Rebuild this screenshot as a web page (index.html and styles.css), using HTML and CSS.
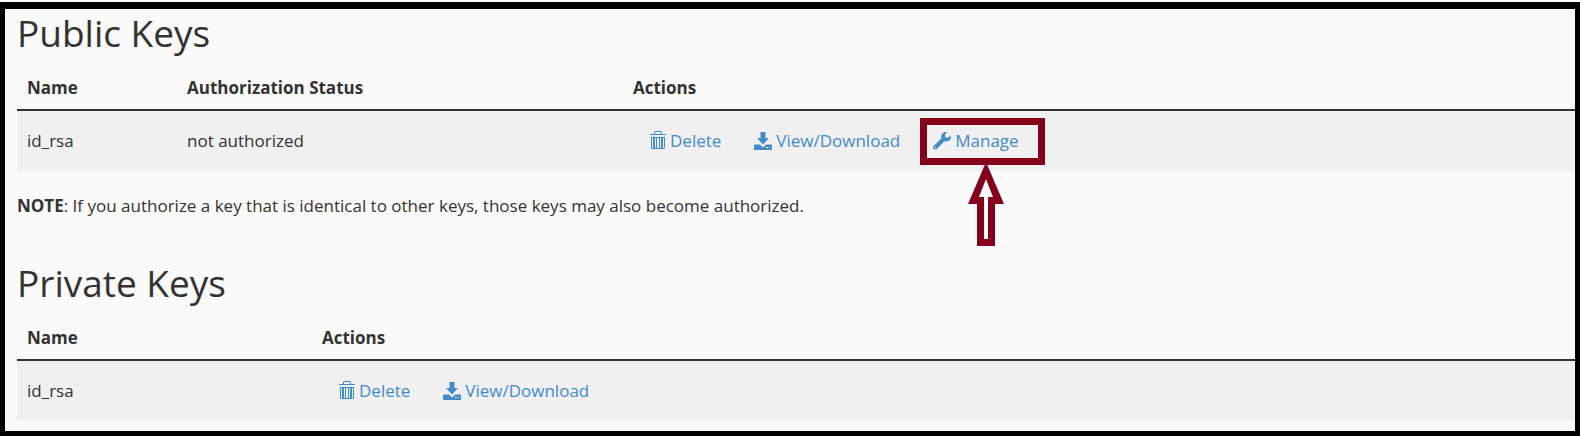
FILE: index.html
```
<!DOCTYPE html>
<html lang="en">
<head>
<meta charset="utf-8">
<title>Manage SSH Keys</title>
<link rel="stylesheet" href="styles.css">
</head>
<body>
<svg class="sprite" aria-hidden="true">
  <symbol id="trash" viewBox="0 0 16 18">
    <path d="M0 3h16v1H0zM4 3V1l1-1h6l1 1v2h-1V1H5v2zM1 6h14v11l-1 1H2l-1-1zM2 7v10h1V7zM5 7v10h1V7zM7 7v10h2V7zM10 7v10h1V7zM13 7v10h1V7z" fill-rule="evenodd"/>
  </symbol>
  <symbol id="download" viewBox="0 0 18 18">
    <path d="M6.500 0h5v6H15L9 12.500 3 6h3.500zM.5 12.500H6l3 3 3-3h5.500l.5.500v4.500l-.5.500H.5L0 17.500V13zM12 15v1h2v-1zM15 15v1h1v-1z" fill-rule="evenodd"/>
  </symbol>
  <symbol id="wrench" viewBox="0 0 18 18">
    <path d="M17.600 3.500c.9 2.400-.2 4.600-2.300 5.500-1.300.6-2.800.6-4 .2L3.800 16.900c-.8.900-2.100.9-3 .1s-.9-2.100-.1-3l7.600-7.400C7.700 4 8.700 1.700 10.800.6c1.200-.6 2.300-.6 3.300-.3L12 2.500l.3 2.800 2.900.4zM2.300 14.900a.8.800 0 1 0 0 1.600.8.800 0 0 0 0-1.600z" fill-rule="evenodd"/>
  </symbol>
</svg>
<main class="page">
  <section class="keys">
    <h2 class="title">Public Keys</h2>
    <table class="table">
      <colgroup><col class="col-name"><col class="col-status"><col></colgroup>
      <thead><tr><th>Name</th><th>Authorization Status</th><th>Actions</th></tr></thead>
      <tbody>
        <tr>
          <td>id_rsa</td>
          <td>not authorized</td>
          <td>
            <div class="actions">
              <a class="action" href="#delete"><svg class="icon icon-trash"><use href="#trash"/></svg>Delete</a>
              <a class="action" href="#view"><svg class="icon"><use href="#download"/></svg>View/Download</a>
              <a class="action" href="#manage"><svg class="icon"><use href="#wrench"/></svg>Manage
                <span class="highlight"></span>
                <svg class="arrow" viewBox="0 0 36 84" aria-hidden="true">
                  <path class="arrow-edge" d="M18 0 36 42H27V84H9V42H0z"/>
                  <path class="arrow-core" d="M18 17 25 35H20V77H16V35H11z"/>
                </svg>
              </a>
            </div>
          </td>
        </tr>
      </tbody>
    </table>
    <p class="note"><strong>NOTE</strong>: If you authorize a key that is identical to other keys, those keys may also become authorized.</p>
  </section>
  <section class="keys">
    <h2 class="title">Private Keys</h2>
    <table class="table">
      <colgroup><col class="col-name-wide"><col></colgroup>
      <thead><tr><th>Name</th><th>Actions</th></tr></thead>
      <tbody>
        <tr>
          <td>id_rsa</td>
          <td>
            <div class="actions">
              <a class="action" href="#delete-private"><svg class="icon icon-trash"><use href="#trash"/></svg>Delete</a>
              <a class="action" href="#view-private"><svg class="icon"><use href="#download"/></svg>View/Download</a>
            </div>
          </td>
        </tr>
      </tbody>
    </table>
  </section>
</main>
</body>
</html>
```
FILE: styles.css
```
* { box-sizing: border-box; }
body {
  margin: 0;
  padding-top: 2px;
  background: #fff;
  color: #333;
  font: 17px/24px "Open Sans", sans-serif;
}
.sprite { position: absolute; width: 0; height: 0; }
.page {
  border: 5px solid #000;
  border-top-width: 7px;
  padding: 0 0 10px 12px;
  background: #fafafa;
}
.title { margin: 0 0 16px; font-size: 37px; line-height: 48px; font-weight: 400; }
.table { width: 100%; border-collapse: collapse; table-layout: fixed; }
.col-name { width: 160px; }
.col-status { width: 446px; }
.col-name-wide { width: 295px; }
.table th {
  padding: 3px 10px 9px;
  border-bottom: 2px solid #333;
  text-align: left;
  font-weight: 700;
}
.table td { padding: 18px 10px; background: #f0f0f0; }
.actions { display: flex; padding-left: 17px; gap: 33px; }
.action {
  position: relative;
  display: flex;
  align-items: center;
  gap: 4px;
  color: #428bca;
  text-decoration: none;
  white-space: nowrap;
}
.icon { width: 18px; height: 18px; fill: currentColor; }
.icon-trash { width: 16px; margin-bottom: 2px; }
.note { margin: 23px 0 41px; }
.highlight {
  position: absolute;
  top: -11px;
  left: -13px;
  width: 125px;
  height: 47px;
  border: 7px solid #85001b;
}
.arrow { position: absolute; top: 33px; left: 35px; width: 36px; height: 84px; }
.arrow-edge { fill: #85001b; }
.arrow-core { fill: #fff; }
```
